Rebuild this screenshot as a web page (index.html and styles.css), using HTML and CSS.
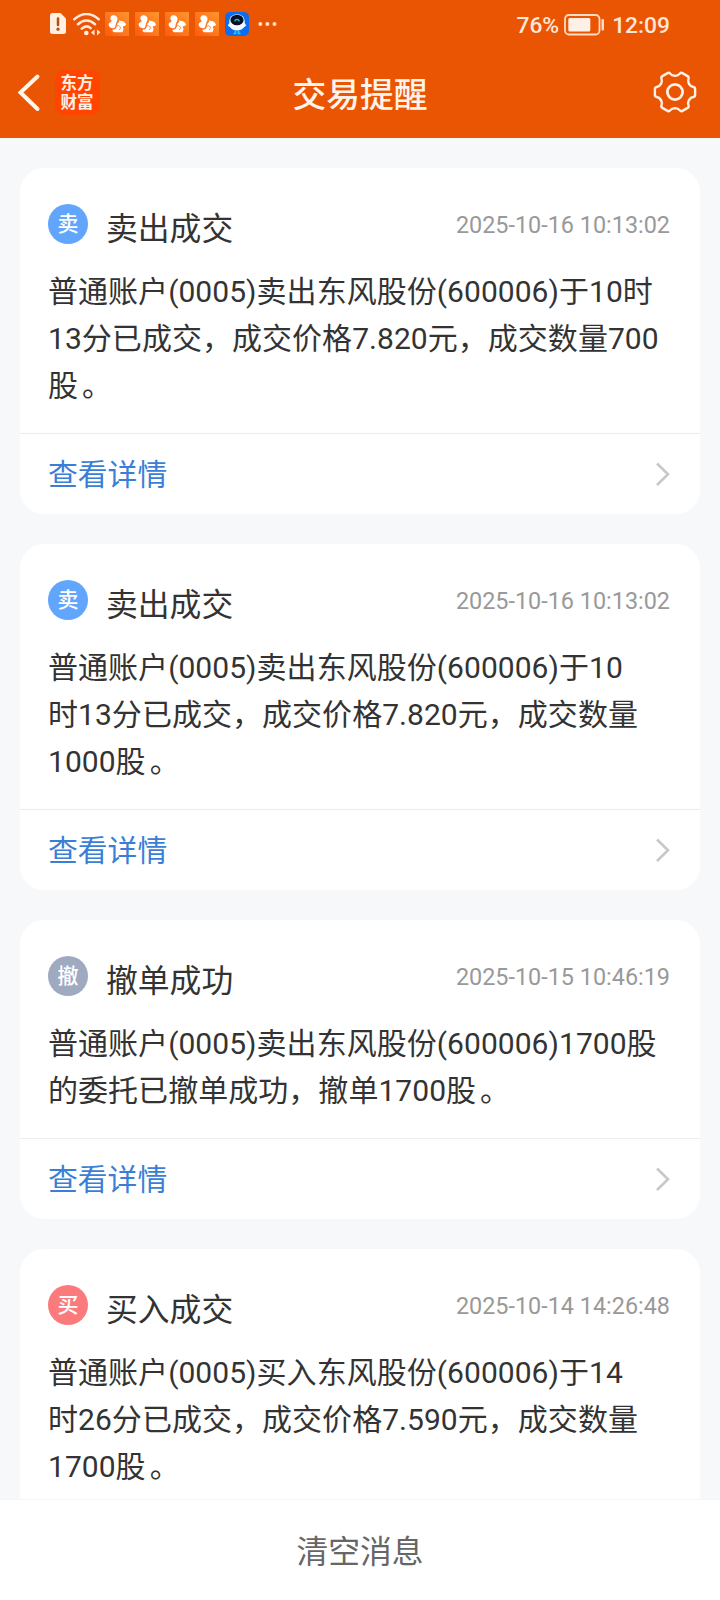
FILE: index.html
```html
<!DOCTYPE html>
<html lang="zh-CN">
<head>
<meta charset="utf-8">
<title>交易提醒</title>
<link rel="stylesheet" href="styles.css">
</head>
<body>
<svg class="defs" width="0" height="0" aria-hidden="true">
  <defs>
    <linearGradient id="app-bg" x1="0" y1="1" x2="1" y2="0">
      <stop offset="0" stop-color="#ff5a0c"/><stop offset="1" stop-color="#ff962e"/>
    </linearGradient>
    <symbol id="squirrel" viewBox="0 0 24 24">
      <rect width="24" height="24" fill="url(#app-bg)"/>
      <path fill="#fff" d="M7 3.500C9.500 2.500 12.300 3.800 12.500 6.500C12.700 8.700 11.300 10 11 11.500C10.500 13 10.500 15 9.500 16C7.500 16.800 5 15.800 4 14C3 12 4.300 10.300 6 10C7 9.600 6.800 8.700 6 8C4.800 6.700 5.200 4.500 7 3.500Z"/>
      <path fill="#fff" d="M14.500 8L15.700 9C18 8.600 20.300 10.300 21 12.500C20.800 13.700 19.300 14.300 17.800 14.200L18.500 17.500L17.500 20.300H9.500C8 20 7.300 18.800 7.500 17.700C9.500 17.800 11.300 16.700 11.800 14.500C12.100 12 13 10.800 14 10Z"/>
      <path fill="none" stroke="#ff7a1d" stroke-width=".8" d="M12 13.800C14 13.200 15.500 14.300 15.500 16.200L14 18"/>
    </symbol>
    <path id="tooth" d="M14 -8.100C15.100 -6.200 16.500 -5.200 18.300 -5Q20.100 -4.700 20.100 -3V3Q20.100 4.700 18.300 5C16.500 5.200 15.100 6.200 14 8.100"/>
    <symbol id="chevron" viewBox="0 0 16 26">
      <path d="M2 2.500L13 13.200L2 24" fill="none" stroke="#c8c8c8" stroke-width="2.600"/>
    </symbol>
  </defs>
</svg>
<div class="screen">
  <header class="top">
    <div class="status">
      <div class="status-icons">
        <svg class="sim" width="18" height="24" viewBox="0 0 18 24"><path d="M3.500 1H11.500L17 6.500V19.500Q17 22 14.500 22H3.500Q1 22 1 19.500V3.500Q1 1 3.500 1Z" fill="#fff0e4"/><path d="M9 6.500V13" stroke="#b5500f" stroke-width="2.500" stroke-linecap="round"/><circle cx="9" cy="17.200" r="1.600" fill="#b5500f"/></svg>
        <svg class="wifi" width="30" height="24" viewBox="0 0 30 24" fill="none" stroke="#ffeadb" stroke-width="2.500" stroke-linecap="round"><path d="M2.300 6.200Q14.500 -4.200 26.700 6.200M6 11.200Q14.500 3.700 23 11.200M9.800 15.700Q14.500 11.400 18.600 15.200"/><circle cx="14.300" cy="20" r="2.300" fill="#ffeadb" stroke="none"/><path d="M22.500 16.500V22.500L19 19.500ZM25 16.500V22.500L28.500 19.300Z" fill="#ffeadb" stroke="none"/></svg>
        <svg class="app" width="24" height="24"><use href="#squirrel"/></svg>
        <svg class="app" width="24" height="24"><use href="#squirrel"/></svg>
        <svg class="app" width="24" height="24"><use href="#squirrel"/></svg>
        <svg class="app" width="24" height="24"><use href="#squirrel"/></svg>
        <svg class="app" width="24" height="24" viewBox="0 0 24 24"><rect width="24" height="24" rx="5" fill="#0c6df0"/><path d="M5 10L2.800 13.500L5.300 15.500Q7.500 18.500 12 18.500Q16.500 18.500 18.700 15.500L21.200 13.500L19 10Z" fill="#f4faff"/><ellipse cx="12" cy="9" rx="7.800" ry="6.800" fill="#f4faff"/><ellipse cx="12" cy="8" rx="6.600" ry="5.300" fill="#061126"/><path d="M9.700 9.300Q10 7.500 12 7.500T14.300 9.300" fill="none" stroke="#18c5df" stroke-width="1.300"/><path d="M10.500 18.500V21.500H8.500M13.500 18.500V21.500H15.500" fill="none" stroke="#20c8ff" stroke-width="1.700"/></svg>
        <svg class="dots" width="19" height="6" viewBox="0 0 19 6" fill="#ffdcc4"><circle cx="2.300" cy="3" r="2"/><circle cx="9.400" cy="3" r="2"/><circle cx="16.500" cy="3" r="2"/></svg>
      </div>
      <div class="status-right">
        <span>76%</span>
        <svg class="battery" width="41" height="22" viewBox="0 0 41 22"><rect x="1" y="1" width="34.500" height="19.500" rx="4" fill="none" stroke="#ffdcc6" stroke-width="1.800"/><rect x="4.300" y="4" width="22" height="13.500" rx="1.500" fill="#fff0e6"/><rect x="37.500" y="5" width="2.500" height="11.500" rx="1" fill="#ffdcc6"/></svg>
        <span>12:09</span>
      </div>
    </div>
    <nav class="nav">
      <div class="nav-side">
        <svg class="back" width="24" height="40" viewBox="0 0 24 40"><path d="M20.500 4.500L3.500 20.500L20.500 37" fill="none" stroke="#fff5eb" stroke-width="4" stroke-linecap="round"/></svg>
        <div class="logo"><span>东方</span><span>财富</span></div>
      </div>
      <h1 class="title">交易提醒</h1>
      <svg class="gear" width="44" height="44" viewBox="-22 -22 44 44" fill="none" stroke="#fff0e4" stroke-width="2.400" stroke-linecap="round"><use href="#tooth"/><use href="#tooth" transform="rotate(60)"/><use href="#tooth" transform="rotate(120)"/><use href="#tooth" transform="rotate(180)"/><use href="#tooth" transform="rotate(240)"/><use href="#tooth" transform="rotate(300)"/><circle r="7.600" stroke-width="2.800"/></svg>
    </nav>
  </header>
  <main class="list">
    <article class="card">
      <div class="card-head"><span class="badge sell">卖</span><h2 class="name">卖出成交</h2><time class="time">2025-10-16 10:13:02</time></div>
      <p class="text">普通账户(0005)卖出东风股份(600006)于10时<br>13分已成交，成交价格7.820元，成交数量700<br>股<span class="stop">。</span></p>
      <a class="more"><span>查看详情</span><svg width="16" height="26"><use href="#chevron"/></svg></a>
    </article>
    <article class="card">
      <div class="card-head"><span class="badge sell">卖</span><h2 class="name">卖出成交</h2><time class="time">2025-10-16 10:13:02</time></div>
      <p class="text">普通账户(0005)卖出东风股份(600006)于10<br>时13分已成交，成交价格7.820元，成交数量<br>1000股<span class="stop">。</span></p>
      <a class="more"><span>查看详情</span><svg width="16" height="26"><use href="#chevron"/></svg></a>
    </article>
    <article class="card">
      <div class="card-head"><span class="badge cancel">撤</span><h2 class="name">撤单成功</h2><time class="time">2025-10-15 10:46:19</time></div>
      <p class="text">普通账户(0005)卖出东风股份(600006)1700股<br>的委托已撤单成功，撤单1700股<span class="stop">。</span></p>
      <a class="more"><span>查看详情</span><svg width="16" height="26"><use href="#chevron"/></svg></a>
    </article>
    <article class="card last">
      <div class="card-head"><span class="badge buy">买</span><h2 class="name">买入成交</h2><time class="time">2025-10-14 14:26:48</time></div>
      <p class="text">普通账户(0005)买入东风股份(600006)于14<br>时26分已成交，成交价格7.590元，成交数量<br>1700股<span class="stop">。</span></p>
    </article>
  </main>
  <footer class="clear">清空消息</footer>
</div>
</body>
</html>
```
FILE: styles.css
```css
* { box-sizing: border-box; margin: 0; padding: 0; }
body { font-family: Roboto, "Noto Sans CJK SC", sans-serif; color: #333; background: #f7f8fa; }
.defs { display: block; height: 0; }
svg { display: block; flex: none; }
.screen { width: 720px; height: 1600px; overflow: hidden; display: flex; flex-direction: column; }

.top { flex: none; height: 138px; background: #ea5504; color: #fff3ea; }
.status { height: 48px; display: flex; justify-content: space-between; padding: 0 50px 0 49px; }
.status-icons { display: flex; align-items: center; }
.wifi { margin: 2px 0 0 5px; }
.app { margin-left: 6px; }
.wifi + .app { margin-left: 3px; }
.dots { margin-left: 9px; }
.status-right { display: flex; align-items: center; font-size: 22.800px; font-weight: 500; line-height: 48px; padding-top: 3px; color: #ffe6d6; }
.battery { margin: 0 7px 2px 5px; }
.nav { height: 90px; display: grid; grid-template-columns: 200px 1fr 200px; align-items: center; padding: 0 23px 2px 17px; }
.nav-side { display: flex; align-items: center; }
.logo { width: 45px; height: 45px; margin: 1px 0 0 14px; border-radius: 9px; background: #ff4500; color: #fff0e4; display: flex; flex-direction: column; align-items: center; justify-content: center; font-size: 16.500px; font-weight: 700; line-height: 19px; padding-right: 1px; }
.title { font-size: 33.800px; font-weight: 500; text-align: center; line-height: 48px; padding: 7px 0 0 6px; }
.gear { justify-self: end; }

.list { flex: 1; min-height: 0; overflow: hidden; padding: 30px 20px 0; display: flex; flex-direction: column; gap: 30px; }
.card { flex: none; background: #fff; border-radius: 24px; }
.last { border-radius: 24px 24px 0 0; padding-bottom: 20px; }
.card-head { display: flex; align-items: center; padding: 36px 30px 0 28px; height: 76px; }
.badge { width: 40px; height: 40px; border-radius: 50%; color: #fff; font-size: 21px; font-weight: 500; line-height: 40px; text-align: center; }
.sell { background: #62a5fc; }
.cancel { background: #9faac1; }
.buy { background: #fb7b7d; }
.name { margin-left: 18px; padding-top: 10px; font-size: 31.800px; font-weight: 400; line-height: 40px; }
.time { margin-left: auto; padding-top: 2px; font-size: 23.400px; color: #999; line-height: 40px; }
.text { padding: 24px 0 24px 28px; font-size: 30px; letter-spacing: .04px; line-height: 47px; white-space: nowrap; }
.stop { margin-left: 4px; }
.more { height: 81px; border-top: 1px solid #ececec; padding: 0 29px 0 28px; display: flex; align-items: center; justify-content: space-between; color: #3a7fd5; font-size: 29.800px; }
.more span { padding-bottom: 4px; }

.clear { flex: none; height: 101px; border-top: 1px solid #f4f5f6; background: #fff; color: #666; font-size: 31.800px; line-height: 105px; text-align: center; }
```
